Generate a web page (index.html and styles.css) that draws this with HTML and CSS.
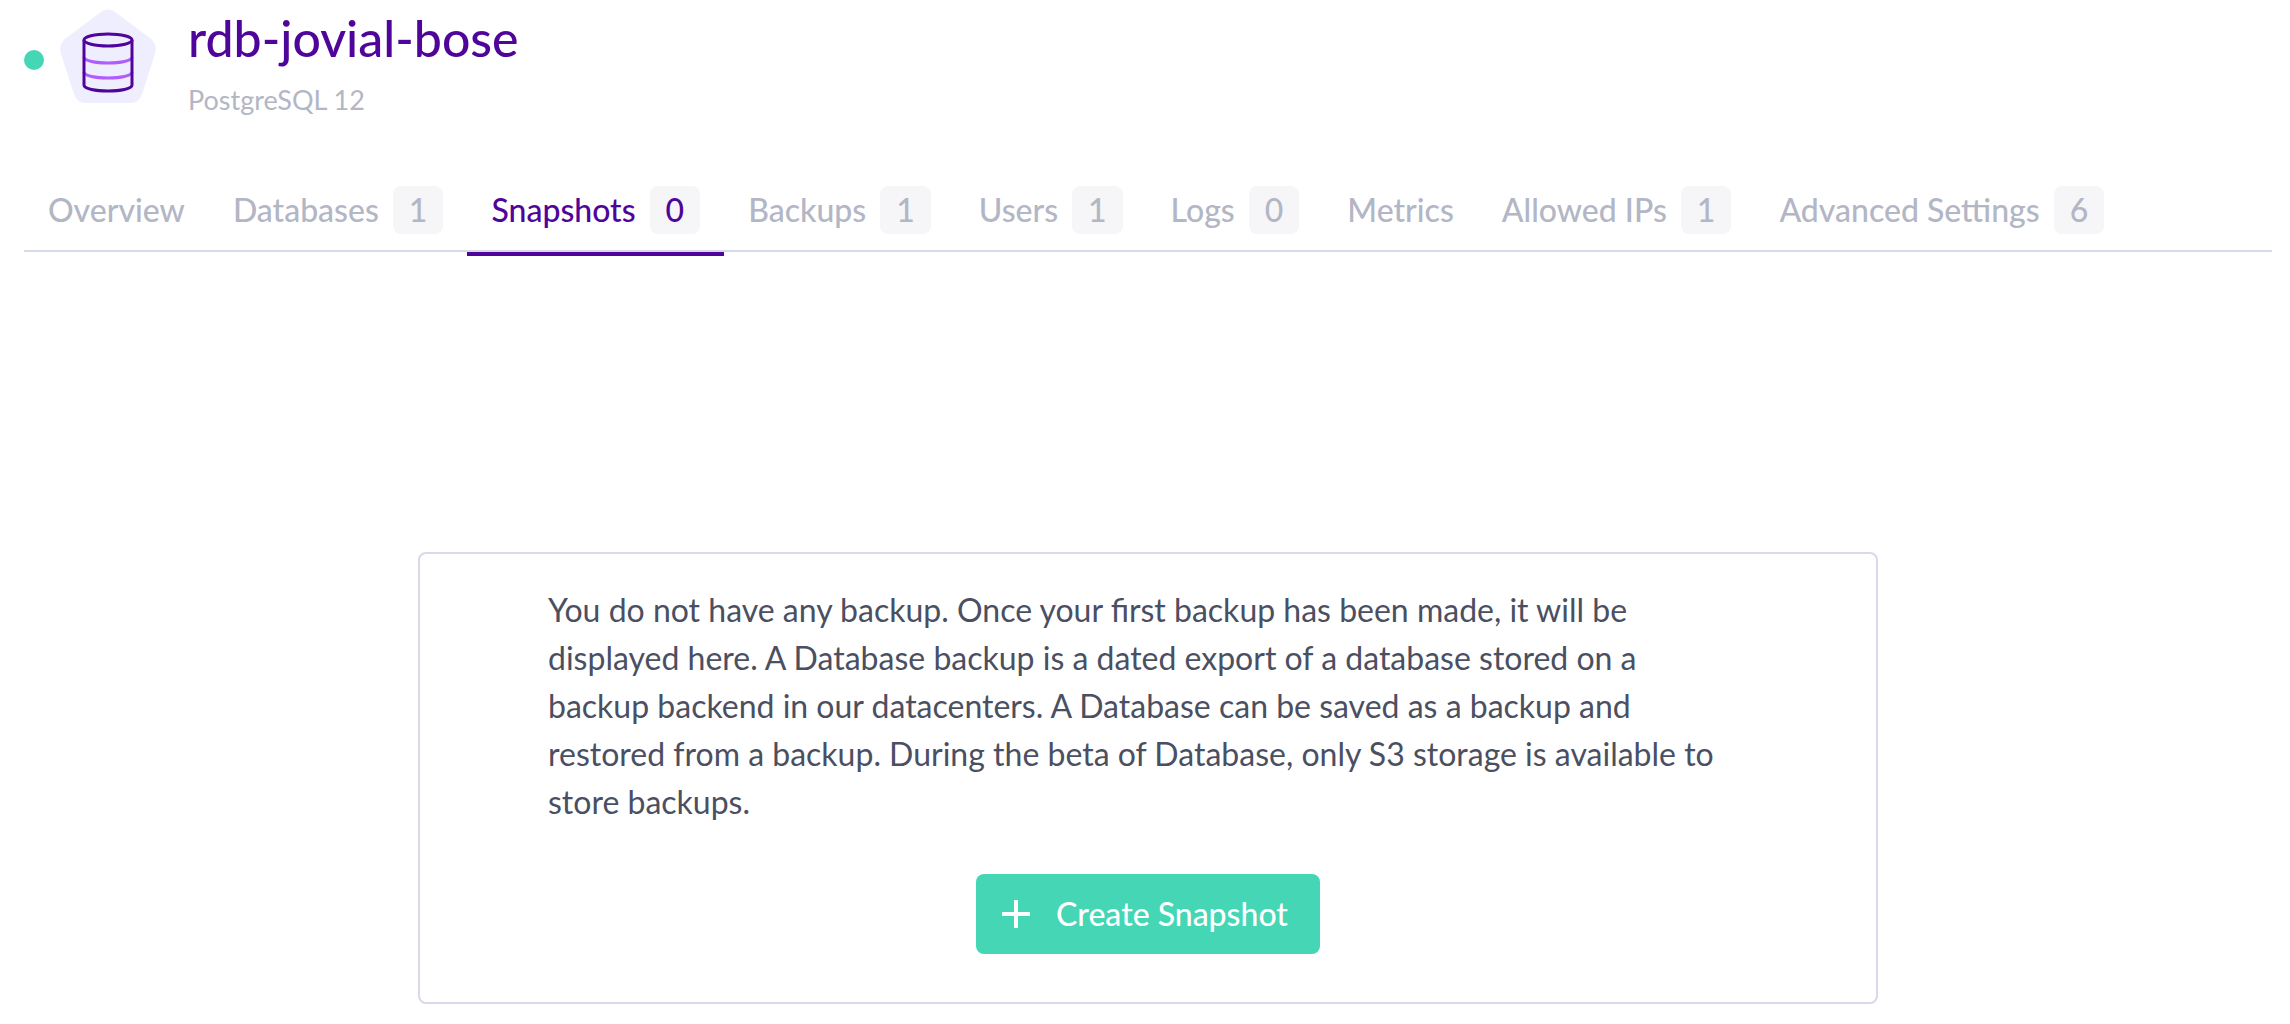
FILE: index.html
```html
<!DOCTYPE html>
<html lang="en">
<head>
<meta charset="utf-8">
<title>rdb-jovial-bose</title>
<link rel="stylesheet" href="styles.css">
</head>
<body>
<header class="header">
  <span class="status"></span>
  <svg class="product" viewBox="0 0 96 96" aria-hidden="true">
    <path class="product-bg" d="M41 3q7-5 14 0L90 29q8 6 5 16L82 85q-3 9-12 9H26q-9 0-12-9L1 45q-3-10 5-16z"/>
    <path class="product-ring" d="M24 48c0 8 48 8 48 0M24 63c0 8 48 8 48 0"/>
    <ellipse class="product-line" cx="48" cy="31" rx="24" ry="6"/>
    <path class="product-line" d="M24 31V76c0 8 48 8 48 0V31"/>
  </svg>
  <div class="heading">
    <h1 class="title">rdb-jovial-bose</h1>
    <p class="subtitle">PostgreSQL 12</p>
  </div>
</header>
<nav class="tabs">
  <a class="tab" href="#overview">Overview</a>
  <a class="tab" href="#databases">Databases <span class="badge">1</span></a>
  <a class="tab tab-active" href="#snapshots" aria-current="page">Snapshots <span class="badge">0</span></a>
  <a class="tab" href="#backups">Backups <span class="badge">1</span></a>
  <a class="tab" href="#users">Users <span class="badge">1</span></a>
  <a class="tab" href="#logs">Logs <span class="badge">0</span></a>
  <a class="tab" href="#metrics">Metrics</a>
  <a class="tab" href="#allowed-ips">Allowed IPs <span class="badge">1</span></a>
  <a class="tab" href="#advanced">Advanced Settings <span class="badge">6</span></a>
</nav>
<main class="main">
  <section class="card">
    <p class="message">You do not have any backup. Once your first backup has been made, it will be displayed here. A Database backup is a dated export of a database stored on a backup backend in our datacenters. A Database can be saved as a backup and restored from a backup. During the beta of Database, only S3 storage is available to store backups.</p>
    <button class="create" type="button">
      <svg class="plus" viewBox="0 0 28 28" aria-hidden="true"><path d="M14 0V28M0 14H28"/></svg>
      Create Snapshot
    </button>
  </section>
</main>
</body>
</html>
```
FILE: styles.css
```css
* { box-sizing: border-box; }

body {
  margin: 0;
  padding: 0 18px 20px 24px;
  background: #fff;
  color: #4a4f62;
  font-family: Lato, "Noto Sans", sans-serif;
  font-size: 32px;
  line-height: 48px;
}

.header {
  display: flex;
  align-items: flex-start;
  padding-top: 8px;
}

.status {
  width: 20px;
  height: 20px;
  margin: 42px 16px 0 0;
  border-radius: 50%;
  background: #45d6b5;
}

.product { width: 96px; height: 96px; margin-top: 1px; }
.product-bg { fill: #eeeeff; }
.product-ring, .product-line { fill: none; stroke-width: 3; }
.product-ring { stroke: #b05cff; }
.product-line { stroke: #4f0599; }

.heading { margin-left: 32px; }

.title {
  margin: 0;
  color: #4f0599;
  font-size: 50px;
  font-weight: 500;
  line-height: 60px;
}

.subtitle {
  margin: 12px 0 0;
  color: #b2b6c5;
  font-size: 27px;
  line-height: 40px;
}

.tabs {
  display: flex;
  margin-top: 50px;
  border-bottom: 2px solid #d4dae7;
}

.tab {
  display: flex;
  align-items: center;
  gap: 14px;
  height: 86px;
  margin-bottom: -6px;
  padding: 16px 24px 18px;
  border-bottom: 4px solid transparent;
  color: #b2b6c5;
  font-weight: 500;
  text-decoration: none;
  white-space: nowrap;
}

.tab-active { border-color: #4f0599; color: #4f0599; }

.badge {
  padding: 0 16px;
  border-radius: 8px;
  background: #f6f6f9;
}

.main { padding-top: 300px; }

.card {
  max-width: 1460px;
  margin: 0 auto;
  padding: 32px 128px 48px;
  border: 2px solid #d8daea;
  border-radius: 8px;
}

.message {
  max-width: 1188px;
  margin: 0 0 48px;
}

.create {
  display: flex;
  align-items: center;
  gap: 26px;
  height: 80px;
  margin: 0 auto;
  padding: 0 32px 0 26px;
  border: 0;
  border-radius: 8px;
  background: #45d6b5;
  color: #fff;
  font: inherit;
  font-weight: 500;
}

.plus {
  width: 28px;
  height: 28px;
  stroke: #fff;
  stroke-width: 4;
}
```
